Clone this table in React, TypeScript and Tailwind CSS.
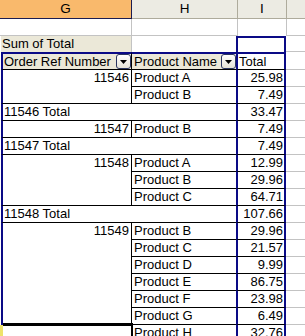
import React from "react";

const font = { fontFamily: '"Liberation Sans", Arial, sans-serif' };

function DropBtn() {
  return (
    <div className="w-[15px] h-[15px] shrink-0 rounded-[3px] border border-[#2a3560] bg-linear-to-b from-white to-[#e4e2d6] flex items-center justify-center">
      <svg width="7" height="4" viewBox="0 0 7 4">
        <path d="M0 0h7L3.5 4z" fill="#000" />
      </svg>
    </div>
  );
}

type GroupRow = { kind: "g"; num?: string; prod: string; val: string; last: boolean; sel?: boolean };
type TotalRow = { kind: "t"; label: string; val: string };
type Row = GroupRow | TotalRow;

const groups: { num: string; items: [string, string][]; total?: string }[] = [
  { num: "11546", items: [["Product A", "25.98"], ["Product B", "7.49"]], total: "33.47" },
  { num: "11547", items: [["Product B", "7.49"]], total: "7.49" },
  { num: "11548", items: [["Product A", "12.99"], ["Product B", "29.96"], ["Product C", "64.71"]], total: "107.66" },
  {
    num: "11549",
    items: [
      ["Product B", "29.96"],
      ["Product C", "21.57"],
      ["Product D", "9.99"],
      ["Product E", "86.75"],
      ["Product F", "23.98"],
      ["Product G", "6.49"],
      ["Product H", "32.76"],
    ],
  },
];

const rows: Row[] = [];
groups.forEach((g) => {
  g.items.forEach(([p, v], i) => {
    rows.push({
      kind: "g",
      num: i === 0 ? g.num : undefined,
      prod: p,
      val: v,
      last: i === g.items.length - 1 && !!g.total,
      sel: p === "Product H",
    });
  });
  if (g.total) rows.push({ kind: "t", label: `${g.num} Total`, val: g.total });
});

function ICell({ val }: { val: string }) {
  return (
    <div className="w-[50px] border-x-2 border-x-[#0a0a86] border-b border-b-black text-right pr-px leading-[16px]">
      {val}
    </div>
  );
}

function JCell() {
  return <div className="w-[19px] border-b border-b-[#c3c3c3]" />;
}

export default function App() {
  return (
    <div className="w-[305px] h-[336px] overflow-hidden bg-white text-black text-[13px]" style={font}>
      {/* column header */}
      <div className="flex h-[19px] text-[13.5px]">
        <div className="w-[132px] bg-[#f9b96c] border-r border-r-[#1c1c50] border-b border-b-[#1c1c50] flex items-center justify-center leading-[18px]">
          G
        </div>
        <div className="w-[106px] bg-[#ecebe3] border-r border-r-[#aeab9c] border-b border-b-[#aeab9c] flex items-center justify-center leading-[18px]">
          H
        </div>
        <div className="w-[49px] bg-[#ecebe3] border-r border-r-[#aeab9c] border-b border-b-[#aeab9c] flex items-center justify-center leading-[18px]">
          I
        </div>
        <div className="w-[18px] bg-[#ecebe3] border-b border-b-[#aeab9c]" />
      </div>

      {/* row 1 */}
      <div className="flex h-[17px]">
        <div className="w-[132px] border-r border-r-[#c3c3c3] border-b border-b-[#c3c3c3]" />
        <div className="w-[106px] border-r border-r-[#c3c3c3] border-b border-b-[#c3c3c3]" />
        <div className="w-[49px] border-r border-r-[#c3c3c3]" />
        <div className="w-[18px] border-b border-b-[#c3c3c3]" />
      </div>

      {/* row 2: Sum of Total */}
      <div className="flex h-[16px]">
        <div className="w-px" />
        <div className="w-[131px] bg-[#ebe8d8] border-r border-r-[#c3c3c3] pl-px leading-[16px]">Sum of Total</div>
        <div className="w-[104px]" />
        <div className="w-[50px] border-x-2 border-x-[#0a0a86] border-t-2 border-t-[#0a0a86]" />
        <div className="w-[19px] border-b border-b-[#c3c3c3]" />
      </div>

      {/* row 3: field headers */}
      <div className="flex h-[18px]">
        <div className="w-px" />
        <div className="w-[131px] bg-[#ebe8d8] border-t-2 border-t-[#0a0a86] border-l-2 border-l-[#0a0a86] border-r border-r-black border-b border-b-black flex items-center justify-between pl-px leading-[15px]">
          <span>Order Ref Number</span>
          <DropBtn />
        </div>
        <div className="w-[104px] bg-[#ebe8d8] border-t-2 border-t-[#0a0a86] border-b border-b-black flex items-center justify-between pl-[2px] leading-[15px]">
          <span>Product Name</span>
          <DropBtn />
        </div>
        <div className="w-[50px] border-t-2 border-t-[#0a0a86] border-x-2 border-x-[#0a0a86] border-b border-b-black pl-px leading-[15px]">
          Total
        </div>
        <div className="w-[19px] border-b border-b-[#c3c3c3]" />
      </div>

      {/* pivot body */}
      {rows.map((r, i) =>
        r.kind === "t" ? (
          <div key={i} className="flex h-[17px]">
            <div className="w-px" />
            <div className="w-[235px] border-l-2 border-l-[#0a0a86] border-b border-b-black pl-px leading-[16px]">{r.label}</div>
            <ICell val={r.val} />
            <JCell />
          </div>
        ) : (
          <div key={i} className="flex h-[17px]">
            <div className={r.sel ? "w-px bg-[#eee36a]" : "w-px"} />
            <div
              className={
                r.sel
                  ? "relative w-[131px] border-l-2 border-l-[#eee36a] border-r border-r-black text-right pr-[2px] leading-[16px]"
                  : r.last
                  ? "w-[131px] border-l-2 border-l-[#0a0a86] border-r border-r-black border-b border-b-black text-right pr-[2px] leading-[16px]"
                  : "w-[131px] border-l-2 border-l-[#0a0a86] border-r border-r-black text-right pr-[2px] leading-[16px]"
              }
            >
              {r.num ?? ""}
              {r.sel && <div className="absolute left-0 top-[-2px] w-[130px] h-[22px] border-t-[3px] border-r-[2px] border-black" />}
            </div>
            <div className="w-[104px] border-b border-b-black pl-[2px] leading-[16px]">{r.prod}</div>
            <ICell val={r.val} />
            <JCell />
          </div>
        )
      )}
    </div>
  );
}
